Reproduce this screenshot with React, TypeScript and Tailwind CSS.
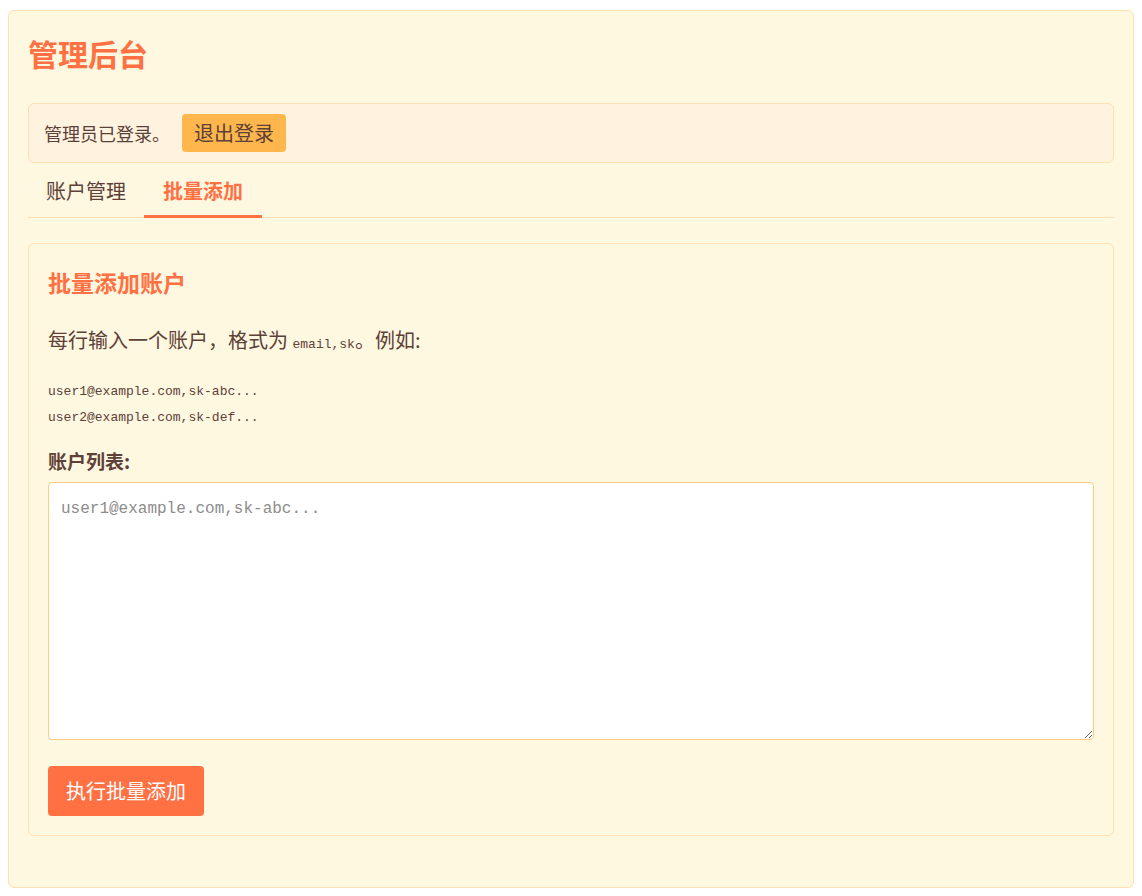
import React from "react";

const sans = { fontFamily: '"Noto Sans CJK SC", "Noto Sans", sans-serif' };
const mono = { fontFamily: '"Liberation Mono", "Noto Sans CJK SC", monospace' };

export default function App() {
  return (
    <div className="min-h-screen bg-white pt-[10px] px-2 pb-2" style={sans}>
      <div className="rounded-md border border-[#ffe0b2] bg-[#fff8e1] px-[19px] pt-[19px] pb-[51px] text-[#5d4037]">
        <h1 className="text-[30px] font-bold leading-[45px] text-[#ff7043] mt-[1px] mb-[27px]">管理后台</h1>

        <div className="flex h-[60px] items-center rounded-md border border-[#ffe0b2] bg-[#fff3e0] px-[15px]">
          <span className="text-[18px]">管理员已登录。</span>
          <button className="ml-3 h-[38px] rounded-[4px] bg-[#ffb74d] px-3 text-[20px] text-[#5d4037]">退出登录</button>
        </div>

        <div className="flex border-b border-[#ffe0b2]">
          <button className="-mb-px h-[55px] border-b-[3px] border-transparent px-[18px] pt-[3px] text-[20px] text-[#5d4037]">账户管理</button>
          <button className="-mb-px h-[55px] border-b-[3px] border-[#ff7043] px-[19px] pt-[3px] text-[20px] font-bold text-[#ff7043]">批量添加</button>
        </div>

        <div className="mt-[25px] rounded-md border border-[#ffe0b2] bg-[#fff8e1] px-[19px] pt-[19px] pb-[19px]">
          <h3 className="text-[23px] font-bold leading-[38px] text-[#ff7043]">批量添加账户</h3>
          <p className="mt-[24px] text-[20px] leading-[30px]">
            每行输入一个账户，格式为{" "}
            <code className="text-[13px]" style={mono}>email,sk</code>
            。例如:
          </p>
          <pre className="mt-[19px] text-[13px] leading-[26px] text-[#5d4037]" style={mono}>
{`user1@example.com,sk-abc...
user2@example.com,sk-def...`}
          </pre>
          <label className="mt-[15px] block text-[19px] font-bold leading-[30px]">账户列表:</label>
          <textarea
            className="mt-[6px] block h-[258px] w-full rounded-[4px] border border-[#ffcc80] bg-white px-3 pt-[14px] pb-3 text-[16px] leading-[24px] outline-none placeholder:text-[#8c8c8c]"
            style={mono}
            placeholder="user1@example.com,sk-abc..."
          />
          <button className="mt-[26px] h-[50px] rounded-[4px] bg-[#ff7043] px-[18px] text-[20px] text-white">执行批量添加</button>
        </div>
      </div>
    </div>
  );
}
